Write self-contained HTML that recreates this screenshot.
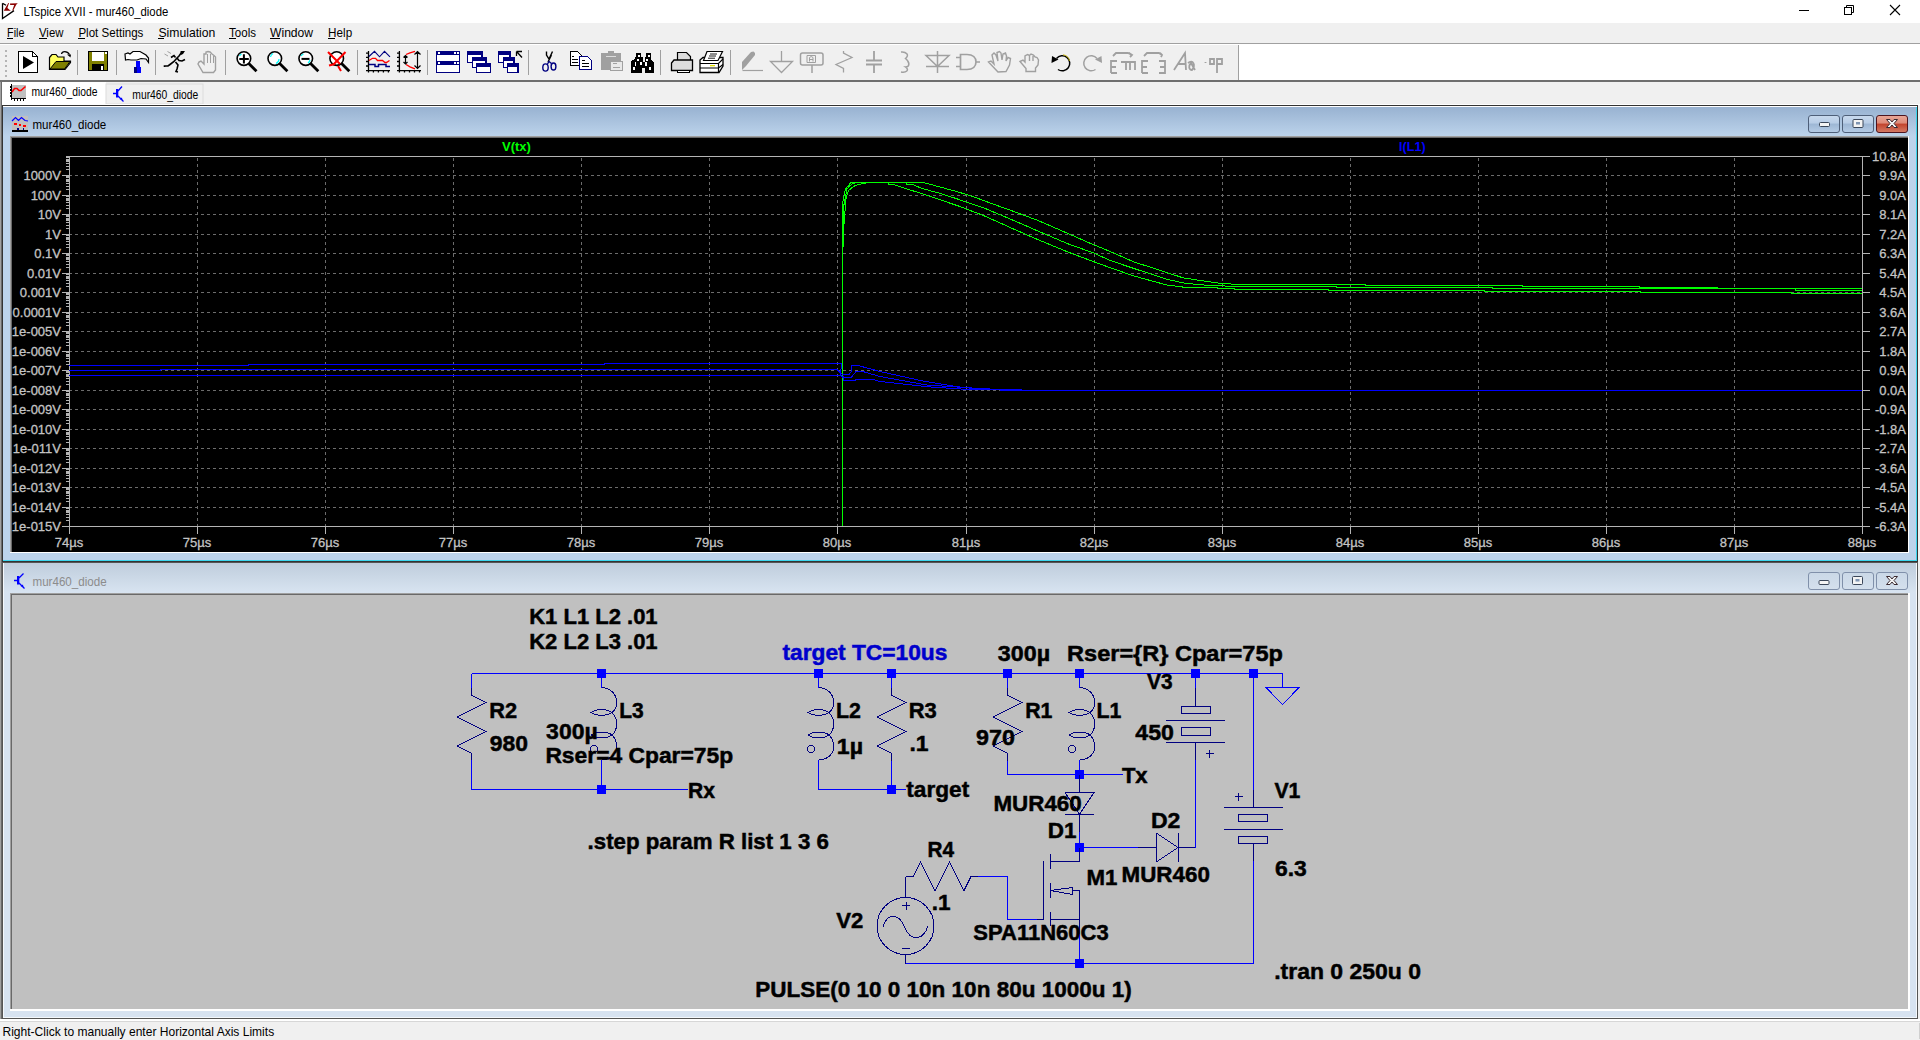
<!DOCTYPE html>
<html><head><meta charset="utf-8"><title>LTspice XVII - mur460_diode</title>
<style>
html,body{margin:0;padding:0;width:1920px;height:1040px;overflow:hidden;background:#f0f0f0;}
svg{position:absolute;left:0;top:0;display:block;font-family:"Liberation Sans",sans-serif;}
</style></head>
<body>
<svg width="1920" height="1040" viewBox="0 0 1920 1040">
<defs>
<linearGradient id="gAct" x1="0" y1="0" x2="0" y2="1"><stop offset="0" stop-color="#98b2d1"/><stop offset="1" stop-color="#bcd3eb"/></linearGradient>
<linearGradient id="gIn" x1="0" y1="0" x2="0" y2="1"><stop offset="0" stop-color="#bfcddc"/><stop offset="1" stop-color="#d8e4f1"/></linearGradient>
<linearGradient id="gBtnA" x1="0" y1="0" x2="0" y2="1"><stop offset="0" stop-color="#c9daee"/><stop offset="0.45" stop-color="#b7cce6"/><stop offset="0.5" stop-color="#9db6d4"/><stop offset="1" stop-color="#b5cce6"/></linearGradient>
<linearGradient id="gBtnC" x1="0" y1="0" x2="0" y2="1"><stop offset="0" stop-color="#eaa899"/><stop offset="0.45" stop-color="#dd8a78"/><stop offset="0.5" stop-color="#c2432c"/><stop offset="1" stop-color="#d47c66"/></linearGradient>
<linearGradient id="gBtnI" x1="0" y1="0" x2="0" y2="1"><stop offset="0" stop-color="#cad8e7"/><stop offset="1" stop-color="#d4e0ed"/></linearGradient>
</defs>
<!-- title bar -->
<rect x="0" y="0" width="1920" height="23" fill="#ffffff"/>
<rect x="0" y="43" width="1920" height="1" fill="#a0a0a0"/>
<rect x="0" y="44" width="1920" height="1" fill="#ffffff"/>
<!-- toolbar right white area -->
<rect x="1239" y="45" width="681" height="35" fill="#ffffff"/>
<rect x="1238" y="45" width="1" height="35" fill="#a0a0a0"/>
<rect x="0" y="80" width="1920" height="2" fill="#6e6e6e"/>
<!-- tabs -->
<rect x="2" y="82" width="104" height="23" fill="#ffffff"/>
<rect x="106" y="84" width="97" height="20" fill="#f0f0f0" stroke="#dcdcdc" stroke-width="1"/>
<rect x="0" y="82" width="1" height="938" fill="#a0a0a0"/>
<rect x="1" y="82" width="1" height="938" fill="#6a6a6a"/>
<rect x="2" y="104" width="1918" height="1" fill="#ffffff"/>
<!-- ========== plot window ========== -->
<rect x="2" y="105" width="1916" height="457" fill="#333333"/>
<rect x="3" y="106" width="1914" height="455" fill="#ffffff"/>
<rect x="3" y="107" width="1913" height="453" fill="#bcd3eb"/>
<rect x="3" y="107" width="1913" height="29" fill="url(#gAct)"/>
<rect x="3" y="560" width="1914" height="1" fill="#3cd6ee"/>
<rect x="1916" y="107" width="1" height="454" fill="#3cd6ee"/>
<rect x="10" y="136" width="1899" height="417" fill="#ffffff"/>
<rect x="10" y="136" width="1898" height="416" fill="#a0a0a0"/>
<rect x="11" y="137" width="1897" height="415" fill="#696969"/>
<rect x="12" y="138" width="1896" height="414" fill="#000000"/>
<!-- plot window buttons -->
<rect x="1808.5" y="115.5" width="31" height="17" rx="2.5" fill="url(#gBtnA)" stroke="#4e5f79"/>
<rect x="1842.5" y="115.5" width="31" height="17" rx="2.5" fill="url(#gBtnA)" stroke="#4e5f79"/>
<rect x="1876.5" y="115.5" width="31" height="17" rx="2.5" fill="url(#gBtnC)" stroke="#4c1520"/>
<rect x="1819.5" y="122.5" width="10" height="4" rx="1" fill="#f4f4f4" stroke="#3a4659"/>
<rect x="1853" y="119.5" width="10" height="8" rx="1" fill="#f4f4f4" stroke="#3a4659"/>
<rect x="1856" y="122" width="4" height="2.5" fill="#7f95b3"/>
<path d="M1886.5,119.5 L1890,119.5 L1892,122 L1894,119.5 L1897.5,119.5 L1894,123.5 L1897.5,127.5 L1894,127.5 L1892,125 L1890,127.5 L1886.5,127.5 L1890,123.5 Z" fill="#f4f4f4" stroke="#3a2a30" stroke-width="1"/>
<!-- plot content -->
<g font-family="Liberation Sans, sans-serif" shape-rendering="crispEdges">
<line x1="197.50" y1="158.00" x2="197.50" y2="526.00" stroke="#6c6c6c" stroke-width="1" stroke-dasharray="3 3"/>
<line x1="325.50" y1="158.00" x2="325.50" y2="526.00" stroke="#6c6c6c" stroke-width="1" stroke-dasharray="3 3"/>
<line x1="453.50" y1="158.00" x2="453.50" y2="526.00" stroke="#6c6c6c" stroke-width="1" stroke-dasharray="3 3"/>
<line x1="581.50" y1="158.00" x2="581.50" y2="526.00" stroke="#6c6c6c" stroke-width="1" stroke-dasharray="3 3"/>
<line x1="709.50" y1="158.00" x2="709.50" y2="526.00" stroke="#6c6c6c" stroke-width="1" stroke-dasharray="3 3"/>
<line x1="837.50" y1="158.00" x2="837.50" y2="526.00" stroke="#6c6c6c" stroke-width="1" stroke-dasharray="3 3"/>
<line x1="966.50" y1="158.00" x2="966.50" y2="526.00" stroke="#6c6c6c" stroke-width="1" stroke-dasharray="3 3"/>
<line x1="1094.50" y1="158.00" x2="1094.50" y2="526.00" stroke="#6c6c6c" stroke-width="1" stroke-dasharray="3 3"/>
<line x1="1222.50" y1="158.00" x2="1222.50" y2="526.00" stroke="#6c6c6c" stroke-width="1" stroke-dasharray="3 3"/>
<line x1="1350.50" y1="158.00" x2="1350.50" y2="526.00" stroke="#6c6c6c" stroke-width="1" stroke-dasharray="3 3"/>
<line x1="1478.50" y1="158.00" x2="1478.50" y2="526.00" stroke="#6c6c6c" stroke-width="1" stroke-dasharray="3 3"/>
<line x1="1606.50" y1="158.00" x2="1606.50" y2="526.00" stroke="#6c6c6c" stroke-width="1" stroke-dasharray="3 3"/>
<line x1="1734.50" y1="158.00" x2="1734.50" y2="526.00" stroke="#6c6c6c" stroke-width="1" stroke-dasharray="3 3"/>
<line x1="69.00" y1="175.50" x2="1862.00" y2="175.50" stroke="#6c6c6c" stroke-width="1" stroke-dasharray="3 3"/>
<line x1="69.00" y1="195.50" x2="1862.00" y2="195.50" stroke="#6c6c6c" stroke-width="1" stroke-dasharray="3 3"/>
<line x1="69.00" y1="214.50" x2="1862.00" y2="214.50" stroke="#6c6c6c" stroke-width="1" stroke-dasharray="3 3"/>
<line x1="69.00" y1="234.50" x2="1862.00" y2="234.50" stroke="#6c6c6c" stroke-width="1" stroke-dasharray="3 3"/>
<line x1="69.00" y1="253.50" x2="1862.00" y2="253.50" stroke="#6c6c6c" stroke-width="1" stroke-dasharray="3 3"/>
<line x1="69.00" y1="273.50" x2="1862.00" y2="273.50" stroke="#6c6c6c" stroke-width="1" stroke-dasharray="3 3"/>
<line x1="69.00" y1="292.50" x2="1862.00" y2="292.50" stroke="#6c6c6c" stroke-width="1" stroke-dasharray="3 3"/>
<line x1="69.00" y1="312.50" x2="1862.00" y2="312.50" stroke="#6c6c6c" stroke-width="1" stroke-dasharray="3 3"/>
<line x1="69.00" y1="331.50" x2="1862.00" y2="331.50" stroke="#6c6c6c" stroke-width="1" stroke-dasharray="3 3"/>
<line x1="69.00" y1="351.50" x2="1862.00" y2="351.50" stroke="#6c6c6c" stroke-width="1" stroke-dasharray="3 3"/>
<line x1="69.00" y1="370.50" x2="1862.00" y2="370.50" stroke="#6c6c6c" stroke-width="1" stroke-dasharray="3 3"/>
<line x1="69.00" y1="390.50" x2="1862.00" y2="390.50" stroke="#6c6c6c" stroke-width="1" stroke-dasharray="3 3"/>
<line x1="69.00" y1="409.50" x2="1862.00" y2="409.50" stroke="#6c6c6c" stroke-width="1" stroke-dasharray="3 3"/>
<line x1="69.00" y1="429.50" x2="1862.00" y2="429.50" stroke="#6c6c6c" stroke-width="1" stroke-dasharray="3 3"/>
<line x1="69.00" y1="448.50" x2="1862.00" y2="448.50" stroke="#6c6c6c" stroke-width="1" stroke-dasharray="3 3"/>
<line x1="69.00" y1="468.50" x2="1862.00" y2="468.50" stroke="#6c6c6c" stroke-width="1" stroke-dasharray="3 3"/>
<line x1="69.00" y1="487.50" x2="1862.00" y2="487.50" stroke="#6c6c6c" stroke-width="1" stroke-dasharray="3 3"/>
<line x1="69.00" y1="507.50" x2="1862.00" y2="507.50" stroke="#6c6c6c" stroke-width="1" stroke-dasharray="3 3"/>
<rect x="69.5" y="156.5" width="1793" height="370" fill="none" stroke="#b4b4b4" stroke-width="1"/>
<line x1="62.00" y1="175.50" x2="69.00" y2="175.50" stroke="#b4b4b4" stroke-width="1"/>
<text x="61" y="180.0" text-anchor="end" font-size="13" fill="#c4c4c4" stroke="#c4c4c4" stroke-width="0.3">1000V</text>
<line x1="62.00" y1="195.50" x2="69.00" y2="195.50" stroke="#b4b4b4" stroke-width="1"/>
<text x="61" y="200.0" text-anchor="end" font-size="13" fill="#c4c4c4" stroke="#c4c4c4" stroke-width="0.3">100V</text>
<line x1="62.00" y1="214.50" x2="69.00" y2="214.50" stroke="#b4b4b4" stroke-width="1"/>
<text x="61" y="219.0" text-anchor="end" font-size="13" fill="#c4c4c4" stroke="#c4c4c4" stroke-width="0.3">10V</text>
<line x1="62.00" y1="234.50" x2="69.00" y2="234.50" stroke="#b4b4b4" stroke-width="1"/>
<text x="61" y="239.0" text-anchor="end" font-size="13" fill="#c4c4c4" stroke="#c4c4c4" stroke-width="0.3">1V</text>
<line x1="62.00" y1="253.50" x2="69.00" y2="253.50" stroke="#b4b4b4" stroke-width="1"/>
<text x="61" y="258.0" text-anchor="end" font-size="13" fill="#c4c4c4" stroke="#c4c4c4" stroke-width="0.3">0.1V</text>
<line x1="62.00" y1="273.50" x2="69.00" y2="273.50" stroke="#b4b4b4" stroke-width="1"/>
<text x="61" y="278.0" text-anchor="end" font-size="13" fill="#c4c4c4" stroke="#c4c4c4" stroke-width="0.3">0.01V</text>
<line x1="62.00" y1="292.50" x2="69.00" y2="292.50" stroke="#b4b4b4" stroke-width="1"/>
<text x="61" y="297.0" text-anchor="end" font-size="13" fill="#c4c4c4" stroke="#c4c4c4" stroke-width="0.3">0.001V</text>
<line x1="62.00" y1="312.50" x2="69.00" y2="312.50" stroke="#b4b4b4" stroke-width="1"/>
<text x="61" y="317.0" text-anchor="end" font-size="13" fill="#c4c4c4" stroke="#c4c4c4" stroke-width="0.3">0.0001V</text>
<line x1="62.00" y1="331.50" x2="69.00" y2="331.50" stroke="#b4b4b4" stroke-width="1"/>
<text x="61" y="336.0" text-anchor="end" font-size="13" fill="#c4c4c4" stroke="#c4c4c4" stroke-width="0.3">1e-005V</text>
<line x1="62.00" y1="351.50" x2="69.00" y2="351.50" stroke="#b4b4b4" stroke-width="1"/>
<text x="61" y="356.0" text-anchor="end" font-size="13" fill="#c4c4c4" stroke="#c4c4c4" stroke-width="0.3">1e-006V</text>
<line x1="62.00" y1="370.50" x2="69.00" y2="370.50" stroke="#b4b4b4" stroke-width="1"/>
<text x="61" y="375.0" text-anchor="end" font-size="13" fill="#c4c4c4" stroke="#c4c4c4" stroke-width="0.3">1e-007V</text>
<line x1="62.00" y1="390.50" x2="69.00" y2="390.50" stroke="#b4b4b4" stroke-width="1"/>
<text x="61" y="395.0" text-anchor="end" font-size="13" fill="#c4c4c4" stroke="#c4c4c4" stroke-width="0.3">1e-008V</text>
<line x1="62.00" y1="409.50" x2="69.00" y2="409.50" stroke="#b4b4b4" stroke-width="1"/>
<text x="61" y="414.0" text-anchor="end" font-size="13" fill="#c4c4c4" stroke="#c4c4c4" stroke-width="0.3">1e-009V</text>
<line x1="62.00" y1="429.50" x2="69.00" y2="429.50" stroke="#b4b4b4" stroke-width="1"/>
<text x="61" y="434.0" text-anchor="end" font-size="13" fill="#c4c4c4" stroke="#c4c4c4" stroke-width="0.3">1e-010V</text>
<line x1="62.00" y1="448.50" x2="69.00" y2="448.50" stroke="#b4b4b4" stroke-width="1"/>
<text x="61" y="453.0" text-anchor="end" font-size="13" fill="#c4c4c4" stroke="#c4c4c4" stroke-width="0.3">1e-011V</text>
<line x1="62.00" y1="468.50" x2="69.00" y2="468.50" stroke="#b4b4b4" stroke-width="1"/>
<text x="61" y="473.0" text-anchor="end" font-size="13" fill="#c4c4c4" stroke="#c4c4c4" stroke-width="0.3">1e-012V</text>
<line x1="62.00" y1="487.50" x2="69.00" y2="487.50" stroke="#b4b4b4" stroke-width="1"/>
<text x="61" y="492.0" text-anchor="end" font-size="13" fill="#c4c4c4" stroke="#c4c4c4" stroke-width="0.3">1e-013V</text>
<line x1="62.00" y1="507.50" x2="69.00" y2="507.50" stroke="#b4b4b4" stroke-width="1"/>
<text x="61" y="512.0" text-anchor="end" font-size="13" fill="#c4c4c4" stroke="#c4c4c4" stroke-width="0.3">1e-014V</text>
<line x1="62.00" y1="526.50" x2="69.00" y2="526.50" stroke="#b4b4b4" stroke-width="1"/>
<text x="61" y="531.0" text-anchor="end" font-size="13" fill="#c4c4c4" stroke="#c4c4c4" stroke-width="0.3">1e-015V</text>
<line x1="66.00" y1="169.50" x2="69.00" y2="169.50" stroke="#b4b4b4" stroke-width="1"/>
<line x1="66.00" y1="166.50" x2="69.00" y2="166.50" stroke="#b4b4b4" stroke-width="1"/>
<line x1="66.00" y1="163.50" x2="69.00" y2="163.50" stroke="#b4b4b4" stroke-width="1"/>
<line x1="66.00" y1="161.50" x2="69.00" y2="161.50" stroke="#b4b4b4" stroke-width="1"/>
<line x1="66.00" y1="160.50" x2="69.00" y2="160.50" stroke="#b4b4b4" stroke-width="1"/>
<line x1="66.00" y1="159.50" x2="69.00" y2="159.50" stroke="#b4b4b4" stroke-width="1"/>
<line x1="66.00" y1="157.50" x2="69.00" y2="157.50" stroke="#b4b4b4" stroke-width="1"/>
<line x1="66.00" y1="156.50" x2="69.00" y2="156.50" stroke="#b4b4b4" stroke-width="1"/>
<line x1="66.00" y1="189.50" x2="69.00" y2="189.50" stroke="#b4b4b4" stroke-width="1"/>
<line x1="66.00" y1="186.50" x2="69.00" y2="186.50" stroke="#b4b4b4" stroke-width="1"/>
<line x1="66.00" y1="183.50" x2="69.00" y2="183.50" stroke="#b4b4b4" stroke-width="1"/>
<line x1="66.00" y1="181.50" x2="69.00" y2="181.50" stroke="#b4b4b4" stroke-width="1"/>
<line x1="66.00" y1="180.50" x2="69.00" y2="180.50" stroke="#b4b4b4" stroke-width="1"/>
<line x1="66.00" y1="179.50" x2="69.00" y2="179.50" stroke="#b4b4b4" stroke-width="1"/>
<line x1="66.00" y1="177.50" x2="69.00" y2="177.50" stroke="#b4b4b4" stroke-width="1"/>
<line x1="66.00" y1="176.50" x2="69.00" y2="176.50" stroke="#b4b4b4" stroke-width="1"/>
<line x1="66.00" y1="208.50" x2="69.00" y2="208.50" stroke="#b4b4b4" stroke-width="1"/>
<line x1="66.00" y1="205.50" x2="69.00" y2="205.50" stroke="#b4b4b4" stroke-width="1"/>
<line x1="66.00" y1="202.50" x2="69.00" y2="202.50" stroke="#b4b4b4" stroke-width="1"/>
<line x1="66.00" y1="200.50" x2="69.00" y2="200.50" stroke="#b4b4b4" stroke-width="1"/>
<line x1="66.00" y1="199.50" x2="69.00" y2="199.50" stroke="#b4b4b4" stroke-width="1"/>
<line x1="66.00" y1="198.50" x2="69.00" y2="198.50" stroke="#b4b4b4" stroke-width="1"/>
<line x1="66.00" y1="196.50" x2="69.00" y2="196.50" stroke="#b4b4b4" stroke-width="1"/>
<line x1="66.00" y1="195.50" x2="69.00" y2="195.50" stroke="#b4b4b4" stroke-width="1"/>
<line x1="66.00" y1="228.50" x2="69.00" y2="228.50" stroke="#b4b4b4" stroke-width="1"/>
<line x1="66.00" y1="225.50" x2="69.00" y2="225.50" stroke="#b4b4b4" stroke-width="1"/>
<line x1="66.00" y1="222.50" x2="69.00" y2="222.50" stroke="#b4b4b4" stroke-width="1"/>
<line x1="66.00" y1="220.50" x2="69.00" y2="220.50" stroke="#b4b4b4" stroke-width="1"/>
<line x1="66.00" y1="219.50" x2="69.00" y2="219.50" stroke="#b4b4b4" stroke-width="1"/>
<line x1="66.00" y1="218.50" x2="69.00" y2="218.50" stroke="#b4b4b4" stroke-width="1"/>
<line x1="66.00" y1="216.50" x2="69.00" y2="216.50" stroke="#b4b4b4" stroke-width="1"/>
<line x1="66.00" y1="215.50" x2="69.00" y2="215.50" stroke="#b4b4b4" stroke-width="1"/>
<line x1="66.00" y1="247.50" x2="69.00" y2="247.50" stroke="#b4b4b4" stroke-width="1"/>
<line x1="66.00" y1="244.50" x2="69.00" y2="244.50" stroke="#b4b4b4" stroke-width="1"/>
<line x1="66.00" y1="241.50" x2="69.00" y2="241.50" stroke="#b4b4b4" stroke-width="1"/>
<line x1="66.00" y1="239.50" x2="69.00" y2="239.50" stroke="#b4b4b4" stroke-width="1"/>
<line x1="66.00" y1="238.50" x2="69.00" y2="238.50" stroke="#b4b4b4" stroke-width="1"/>
<line x1="66.00" y1="237.50" x2="69.00" y2="237.50" stroke="#b4b4b4" stroke-width="1"/>
<line x1="66.00" y1="235.50" x2="69.00" y2="235.50" stroke="#b4b4b4" stroke-width="1"/>
<line x1="66.00" y1="234.50" x2="69.00" y2="234.50" stroke="#b4b4b4" stroke-width="1"/>
<line x1="66.00" y1="267.50" x2="69.00" y2="267.50" stroke="#b4b4b4" stroke-width="1"/>
<line x1="66.00" y1="264.50" x2="69.00" y2="264.50" stroke="#b4b4b4" stroke-width="1"/>
<line x1="66.00" y1="261.50" x2="69.00" y2="261.50" stroke="#b4b4b4" stroke-width="1"/>
<line x1="66.00" y1="259.50" x2="69.00" y2="259.50" stroke="#b4b4b4" stroke-width="1"/>
<line x1="66.00" y1="258.50" x2="69.00" y2="258.50" stroke="#b4b4b4" stroke-width="1"/>
<line x1="66.00" y1="257.50" x2="69.00" y2="257.50" stroke="#b4b4b4" stroke-width="1"/>
<line x1="66.00" y1="255.50" x2="69.00" y2="255.50" stroke="#b4b4b4" stroke-width="1"/>
<line x1="66.00" y1="254.50" x2="69.00" y2="254.50" stroke="#b4b4b4" stroke-width="1"/>
<line x1="66.00" y1="286.50" x2="69.00" y2="286.50" stroke="#b4b4b4" stroke-width="1"/>
<line x1="66.00" y1="283.50" x2="69.00" y2="283.50" stroke="#b4b4b4" stroke-width="1"/>
<line x1="66.00" y1="280.50" x2="69.00" y2="280.50" stroke="#b4b4b4" stroke-width="1"/>
<line x1="66.00" y1="278.50" x2="69.00" y2="278.50" stroke="#b4b4b4" stroke-width="1"/>
<line x1="66.00" y1="277.50" x2="69.00" y2="277.50" stroke="#b4b4b4" stroke-width="1"/>
<line x1="66.00" y1="276.50" x2="69.00" y2="276.50" stroke="#b4b4b4" stroke-width="1"/>
<line x1="66.00" y1="274.50" x2="69.00" y2="274.50" stroke="#b4b4b4" stroke-width="1"/>
<line x1="66.00" y1="273.50" x2="69.00" y2="273.50" stroke="#b4b4b4" stroke-width="1"/>
<line x1="66.00" y1="306.50" x2="69.00" y2="306.50" stroke="#b4b4b4" stroke-width="1"/>
<line x1="66.00" y1="303.50" x2="69.00" y2="303.50" stroke="#b4b4b4" stroke-width="1"/>
<line x1="66.00" y1="300.50" x2="69.00" y2="300.50" stroke="#b4b4b4" stroke-width="1"/>
<line x1="66.00" y1="298.50" x2="69.00" y2="298.50" stroke="#b4b4b4" stroke-width="1"/>
<line x1="66.00" y1="297.50" x2="69.00" y2="297.50" stroke="#b4b4b4" stroke-width="1"/>
<line x1="66.00" y1="296.50" x2="69.00" y2="296.50" stroke="#b4b4b4" stroke-width="1"/>
<line x1="66.00" y1="294.50" x2="69.00" y2="294.50" stroke="#b4b4b4" stroke-width="1"/>
<line x1="66.00" y1="293.50" x2="69.00" y2="293.50" stroke="#b4b4b4" stroke-width="1"/>
<line x1="66.00" y1="325.50" x2="69.00" y2="325.50" stroke="#b4b4b4" stroke-width="1"/>
<line x1="66.00" y1="322.50" x2="69.00" y2="322.50" stroke="#b4b4b4" stroke-width="1"/>
<line x1="66.00" y1="319.50" x2="69.00" y2="319.50" stroke="#b4b4b4" stroke-width="1"/>
<line x1="66.00" y1="317.50" x2="69.00" y2="317.50" stroke="#b4b4b4" stroke-width="1"/>
<line x1="66.00" y1="316.50" x2="69.00" y2="316.50" stroke="#b4b4b4" stroke-width="1"/>
<line x1="66.00" y1="315.50" x2="69.00" y2="315.50" stroke="#b4b4b4" stroke-width="1"/>
<line x1="66.00" y1="313.50" x2="69.00" y2="313.50" stroke="#b4b4b4" stroke-width="1"/>
<line x1="66.00" y1="312.50" x2="69.00" y2="312.50" stroke="#b4b4b4" stroke-width="1"/>
<line x1="66.00" y1="345.50" x2="69.00" y2="345.50" stroke="#b4b4b4" stroke-width="1"/>
<line x1="66.00" y1="342.50" x2="69.00" y2="342.50" stroke="#b4b4b4" stroke-width="1"/>
<line x1="66.00" y1="339.50" x2="69.00" y2="339.50" stroke="#b4b4b4" stroke-width="1"/>
<line x1="66.00" y1="337.50" x2="69.00" y2="337.50" stroke="#b4b4b4" stroke-width="1"/>
<line x1="66.00" y1="336.50" x2="69.00" y2="336.50" stroke="#b4b4b4" stroke-width="1"/>
<line x1="66.00" y1="335.50" x2="69.00" y2="335.50" stroke="#b4b4b4" stroke-width="1"/>
<line x1="66.00" y1="333.50" x2="69.00" y2="333.50" stroke="#b4b4b4" stroke-width="1"/>
<line x1="66.00" y1="332.50" x2="69.00" y2="332.50" stroke="#b4b4b4" stroke-width="1"/>
<line x1="66.00" y1="364.50" x2="69.00" y2="364.50" stroke="#b4b4b4" stroke-width="1"/>
<line x1="66.00" y1="361.50" x2="69.00" y2="361.50" stroke="#b4b4b4" stroke-width="1"/>
<line x1="66.00" y1="358.50" x2="69.00" y2="358.50" stroke="#b4b4b4" stroke-width="1"/>
<line x1="66.00" y1="356.50" x2="69.00" y2="356.50" stroke="#b4b4b4" stroke-width="1"/>
<line x1="66.00" y1="355.50" x2="69.00" y2="355.50" stroke="#b4b4b4" stroke-width="1"/>
<line x1="66.00" y1="354.50" x2="69.00" y2="354.50" stroke="#b4b4b4" stroke-width="1"/>
<line x1="66.00" y1="352.50" x2="69.00" y2="352.50" stroke="#b4b4b4" stroke-width="1"/>
<line x1="66.00" y1="351.50" x2="69.00" y2="351.50" stroke="#b4b4b4" stroke-width="1"/>
<line x1="66.00" y1="384.50" x2="69.00" y2="384.50" stroke="#b4b4b4" stroke-width="1"/>
<line x1="66.00" y1="381.50" x2="69.00" y2="381.50" stroke="#b4b4b4" stroke-width="1"/>
<line x1="66.00" y1="378.50" x2="69.00" y2="378.50" stroke="#b4b4b4" stroke-width="1"/>
<line x1="66.00" y1="376.50" x2="69.00" y2="376.50" stroke="#b4b4b4" stroke-width="1"/>
<line x1="66.00" y1="375.50" x2="69.00" y2="375.50" stroke="#b4b4b4" stroke-width="1"/>
<line x1="66.00" y1="374.50" x2="69.00" y2="374.50" stroke="#b4b4b4" stroke-width="1"/>
<line x1="66.00" y1="372.50" x2="69.00" y2="372.50" stroke="#b4b4b4" stroke-width="1"/>
<line x1="66.00" y1="371.50" x2="69.00" y2="371.50" stroke="#b4b4b4" stroke-width="1"/>
<line x1="66.00" y1="403.50" x2="69.00" y2="403.50" stroke="#b4b4b4" stroke-width="1"/>
<line x1="66.00" y1="400.50" x2="69.00" y2="400.50" stroke="#b4b4b4" stroke-width="1"/>
<line x1="66.00" y1="397.50" x2="69.00" y2="397.50" stroke="#b4b4b4" stroke-width="1"/>
<line x1="66.00" y1="395.50" x2="69.00" y2="395.50" stroke="#b4b4b4" stroke-width="1"/>
<line x1="66.00" y1="394.50" x2="69.00" y2="394.50" stroke="#b4b4b4" stroke-width="1"/>
<line x1="66.00" y1="393.50" x2="69.00" y2="393.50" stroke="#b4b4b4" stroke-width="1"/>
<line x1="66.00" y1="391.50" x2="69.00" y2="391.50" stroke="#b4b4b4" stroke-width="1"/>
<line x1="66.00" y1="390.50" x2="69.00" y2="390.50" stroke="#b4b4b4" stroke-width="1"/>
<line x1="66.00" y1="423.50" x2="69.00" y2="423.50" stroke="#b4b4b4" stroke-width="1"/>
<line x1="66.00" y1="420.50" x2="69.00" y2="420.50" stroke="#b4b4b4" stroke-width="1"/>
<line x1="66.00" y1="417.50" x2="69.00" y2="417.50" stroke="#b4b4b4" stroke-width="1"/>
<line x1="66.00" y1="415.50" x2="69.00" y2="415.50" stroke="#b4b4b4" stroke-width="1"/>
<line x1="66.00" y1="414.50" x2="69.00" y2="414.50" stroke="#b4b4b4" stroke-width="1"/>
<line x1="66.00" y1="413.50" x2="69.00" y2="413.50" stroke="#b4b4b4" stroke-width="1"/>
<line x1="66.00" y1="411.50" x2="69.00" y2="411.50" stroke="#b4b4b4" stroke-width="1"/>
<line x1="66.00" y1="410.50" x2="69.00" y2="410.50" stroke="#b4b4b4" stroke-width="1"/>
<line x1="66.00" y1="442.50" x2="69.00" y2="442.50" stroke="#b4b4b4" stroke-width="1"/>
<line x1="66.00" y1="439.50" x2="69.00" y2="439.50" stroke="#b4b4b4" stroke-width="1"/>
<line x1="66.00" y1="436.50" x2="69.00" y2="436.50" stroke="#b4b4b4" stroke-width="1"/>
<line x1="66.00" y1="434.50" x2="69.00" y2="434.50" stroke="#b4b4b4" stroke-width="1"/>
<line x1="66.00" y1="433.50" x2="69.00" y2="433.50" stroke="#b4b4b4" stroke-width="1"/>
<line x1="66.00" y1="432.50" x2="69.00" y2="432.50" stroke="#b4b4b4" stroke-width="1"/>
<line x1="66.00" y1="430.50" x2="69.00" y2="430.50" stroke="#b4b4b4" stroke-width="1"/>
<line x1="66.00" y1="429.50" x2="69.00" y2="429.50" stroke="#b4b4b4" stroke-width="1"/>
<line x1="66.00" y1="462.50" x2="69.00" y2="462.50" stroke="#b4b4b4" stroke-width="1"/>
<line x1="66.00" y1="459.50" x2="69.00" y2="459.50" stroke="#b4b4b4" stroke-width="1"/>
<line x1="66.00" y1="456.50" x2="69.00" y2="456.50" stroke="#b4b4b4" stroke-width="1"/>
<line x1="66.00" y1="454.50" x2="69.00" y2="454.50" stroke="#b4b4b4" stroke-width="1"/>
<line x1="66.00" y1="453.50" x2="69.00" y2="453.50" stroke="#b4b4b4" stroke-width="1"/>
<line x1="66.00" y1="452.50" x2="69.00" y2="452.50" stroke="#b4b4b4" stroke-width="1"/>
<line x1="66.00" y1="450.50" x2="69.00" y2="450.50" stroke="#b4b4b4" stroke-width="1"/>
<line x1="66.00" y1="449.50" x2="69.00" y2="449.50" stroke="#b4b4b4" stroke-width="1"/>
<line x1="66.00" y1="481.50" x2="69.00" y2="481.50" stroke="#b4b4b4" stroke-width="1"/>
<line x1="66.00" y1="478.50" x2="69.00" y2="478.50" stroke="#b4b4b4" stroke-width="1"/>
<line x1="66.00" y1="475.50" x2="69.00" y2="475.50" stroke="#b4b4b4" stroke-width="1"/>
<line x1="66.00" y1="473.50" x2="69.00" y2="473.50" stroke="#b4b4b4" stroke-width="1"/>
<line x1="66.00" y1="472.50" x2="69.00" y2="472.50" stroke="#b4b4b4" stroke-width="1"/>
<line x1="66.00" y1="471.50" x2="69.00" y2="471.50" stroke="#b4b4b4" stroke-width="1"/>
<line x1="66.00" y1="469.50" x2="69.00" y2="469.50" stroke="#b4b4b4" stroke-width="1"/>
<line x1="66.00" y1="468.50" x2="69.00" y2="468.50" stroke="#b4b4b4" stroke-width="1"/>
<line x1="66.00" y1="501.50" x2="69.00" y2="501.50" stroke="#b4b4b4" stroke-width="1"/>
<line x1="66.00" y1="498.50" x2="69.00" y2="498.50" stroke="#b4b4b4" stroke-width="1"/>
<line x1="66.00" y1="495.50" x2="69.00" y2="495.50" stroke="#b4b4b4" stroke-width="1"/>
<line x1="66.00" y1="493.50" x2="69.00" y2="493.50" stroke="#b4b4b4" stroke-width="1"/>
<line x1="66.00" y1="492.50" x2="69.00" y2="492.50" stroke="#b4b4b4" stroke-width="1"/>
<line x1="66.00" y1="491.50" x2="69.00" y2="491.50" stroke="#b4b4b4" stroke-width="1"/>
<line x1="66.00" y1="489.50" x2="69.00" y2="489.50" stroke="#b4b4b4" stroke-width="1"/>
<line x1="66.00" y1="488.50" x2="69.00" y2="488.50" stroke="#b4b4b4" stroke-width="1"/>
<line x1="66.00" y1="520.50" x2="69.00" y2="520.50" stroke="#b4b4b4" stroke-width="1"/>
<line x1="66.00" y1="517.50" x2="69.00" y2="517.50" stroke="#b4b4b4" stroke-width="1"/>
<line x1="66.00" y1="514.50" x2="69.00" y2="514.50" stroke="#b4b4b4" stroke-width="1"/>
<line x1="66.00" y1="512.50" x2="69.00" y2="512.50" stroke="#b4b4b4" stroke-width="1"/>
<line x1="66.00" y1="511.50" x2="69.00" y2="511.50" stroke="#b4b4b4" stroke-width="1"/>
<line x1="66.00" y1="510.50" x2="69.00" y2="510.50" stroke="#b4b4b4" stroke-width="1"/>
<line x1="66.00" y1="508.50" x2="69.00" y2="508.50" stroke="#b4b4b4" stroke-width="1"/>
<line x1="66.00" y1="507.50" x2="69.00" y2="507.50" stroke="#b4b4b4" stroke-width="1"/>
<line x1="1862.00" y1="156.50" x2="1870.00" y2="156.50" stroke="#b4b4b4" stroke-width="1"/>
<text x="1906" y="161.0" text-anchor="end" font-size="13" fill="#c4c4c4" stroke="#c4c4c4" stroke-width="0.3">10.8A</text>
<line x1="1862.00" y1="175.50" x2="1870.00" y2="175.50" stroke="#b4b4b4" stroke-width="1"/>
<text x="1906" y="180.0" text-anchor="end" font-size="13" fill="#c4c4c4" stroke="#c4c4c4" stroke-width="0.3">9.9A</text>
<line x1="1862.00" y1="195.50" x2="1870.00" y2="195.50" stroke="#b4b4b4" stroke-width="1"/>
<text x="1906" y="200.0" text-anchor="end" font-size="13" fill="#c4c4c4" stroke="#c4c4c4" stroke-width="0.3">9.0A</text>
<line x1="1862.00" y1="214.50" x2="1870.00" y2="214.50" stroke="#b4b4b4" stroke-width="1"/>
<text x="1906" y="219.0" text-anchor="end" font-size="13" fill="#c4c4c4" stroke="#c4c4c4" stroke-width="0.3">8.1A</text>
<line x1="1862.00" y1="234.50" x2="1870.00" y2="234.50" stroke="#b4b4b4" stroke-width="1"/>
<text x="1906" y="239.0" text-anchor="end" font-size="13" fill="#c4c4c4" stroke="#c4c4c4" stroke-width="0.3">7.2A</text>
<line x1="1862.00" y1="253.50" x2="1870.00" y2="253.50" stroke="#b4b4b4" stroke-width="1"/>
<text x="1906" y="258.0" text-anchor="end" font-size="13" fill="#c4c4c4" stroke="#c4c4c4" stroke-width="0.3">6.3A</text>
<line x1="1862.00" y1="273.50" x2="1870.00" y2="273.50" stroke="#b4b4b4" stroke-width="1"/>
<text x="1906" y="278.0" text-anchor="end" font-size="13" fill="#c4c4c4" stroke="#c4c4c4" stroke-width="0.3">5.4A</text>
<line x1="1862.00" y1="292.50" x2="1870.00" y2="292.50" stroke="#b4b4b4" stroke-width="1"/>
<text x="1906" y="297.0" text-anchor="end" font-size="13" fill="#c4c4c4" stroke="#c4c4c4" stroke-width="0.3">4.5A</text>
<line x1="1862.00" y1="312.50" x2="1870.00" y2="312.50" stroke="#b4b4b4" stroke-width="1"/>
<text x="1906" y="317.0" text-anchor="end" font-size="13" fill="#c4c4c4" stroke="#c4c4c4" stroke-width="0.3">3.6A</text>
<line x1="1862.00" y1="331.50" x2="1870.00" y2="331.50" stroke="#b4b4b4" stroke-width="1"/>
<text x="1906" y="336.0" text-anchor="end" font-size="13" fill="#c4c4c4" stroke="#c4c4c4" stroke-width="0.3">2.7A</text>
<line x1="1862.00" y1="351.50" x2="1870.00" y2="351.50" stroke="#b4b4b4" stroke-width="1"/>
<text x="1906" y="356.0" text-anchor="end" font-size="13" fill="#c4c4c4" stroke="#c4c4c4" stroke-width="0.3">1.8A</text>
<line x1="1862.00" y1="370.50" x2="1870.00" y2="370.50" stroke="#b4b4b4" stroke-width="1"/>
<text x="1906" y="375.0" text-anchor="end" font-size="13" fill="#c4c4c4" stroke="#c4c4c4" stroke-width="0.3">0.9A</text>
<line x1="1862.00" y1="390.50" x2="1870.00" y2="390.50" stroke="#b4b4b4" stroke-width="1"/>
<text x="1906" y="395.0" text-anchor="end" font-size="13" fill="#c4c4c4" stroke="#c4c4c4" stroke-width="0.3">0.0A</text>
<line x1="1862.00" y1="409.50" x2="1870.00" y2="409.50" stroke="#b4b4b4" stroke-width="1"/>
<text x="1906" y="414.0" text-anchor="end" font-size="13" fill="#c4c4c4" stroke="#c4c4c4" stroke-width="0.3">-0.9A</text>
<line x1="1862.00" y1="429.50" x2="1870.00" y2="429.50" stroke="#b4b4b4" stroke-width="1"/>
<text x="1906" y="434.0" text-anchor="end" font-size="13" fill="#c4c4c4" stroke="#c4c4c4" stroke-width="0.3">-1.8A</text>
<line x1="1862.00" y1="448.50" x2="1870.00" y2="448.50" stroke="#b4b4b4" stroke-width="1"/>
<text x="1906" y="453.0" text-anchor="end" font-size="13" fill="#c4c4c4" stroke="#c4c4c4" stroke-width="0.3">-2.7A</text>
<line x1="1862.00" y1="468.50" x2="1870.00" y2="468.50" stroke="#b4b4b4" stroke-width="1"/>
<text x="1906" y="473.0" text-anchor="end" font-size="13" fill="#c4c4c4" stroke="#c4c4c4" stroke-width="0.3">-3.6A</text>
<line x1="1862.00" y1="487.50" x2="1870.00" y2="487.50" stroke="#b4b4b4" stroke-width="1"/>
<text x="1906" y="492.0" text-anchor="end" font-size="13" fill="#c4c4c4" stroke="#c4c4c4" stroke-width="0.3">-4.5A</text>
<line x1="1862.00" y1="507.50" x2="1870.00" y2="507.50" stroke="#b4b4b4" stroke-width="1"/>
<text x="1906" y="512.0" text-anchor="end" font-size="13" fill="#c4c4c4" stroke="#c4c4c4" stroke-width="0.3">-5.4A</text>
<line x1="1862.00" y1="526.50" x2="1870.00" y2="526.50" stroke="#b4b4b4" stroke-width="1"/>
<text x="1906" y="531.0" text-anchor="end" font-size="13" fill="#c4c4c4" stroke="#c4c4c4" stroke-width="0.3">-6.3A</text>
<line x1="69.50" y1="526.00" x2="69.50" y2="534.00" stroke="#b4b4b4" stroke-width="1"/>
<text x="69.0" y="546.8" text-anchor="middle" font-size="13" fill="#c4c4c4" stroke="#c4c4c4" stroke-width="0.3">74µs</text>
<line x1="197.50" y1="526.00" x2="197.50" y2="534.00" stroke="#b4b4b4" stroke-width="1"/>
<text x="197.0" y="546.8" text-anchor="middle" font-size="13" fill="#c4c4c4" stroke="#c4c4c4" stroke-width="0.3">75µs</text>
<line x1="325.50" y1="526.00" x2="325.50" y2="534.00" stroke="#b4b4b4" stroke-width="1"/>
<text x="325.0" y="546.8" text-anchor="middle" font-size="13" fill="#c4c4c4" stroke="#c4c4c4" stroke-width="0.3">76µs</text>
<line x1="453.50" y1="526.00" x2="453.50" y2="534.00" stroke="#b4b4b4" stroke-width="1"/>
<text x="453.0" y="546.8" text-anchor="middle" font-size="13" fill="#c4c4c4" stroke="#c4c4c4" stroke-width="0.3">77µs</text>
<line x1="581.50" y1="526.00" x2="581.50" y2="534.00" stroke="#b4b4b4" stroke-width="1"/>
<text x="581.0" y="546.8" text-anchor="middle" font-size="13" fill="#c4c4c4" stroke="#c4c4c4" stroke-width="0.3">78µs</text>
<line x1="709.50" y1="526.00" x2="709.50" y2="534.00" stroke="#b4b4b4" stroke-width="1"/>
<text x="709.0" y="546.8" text-anchor="middle" font-size="13" fill="#c4c4c4" stroke="#c4c4c4" stroke-width="0.3">79µs</text>
<line x1="837.50" y1="526.00" x2="837.50" y2="534.00" stroke="#b4b4b4" stroke-width="1"/>
<text x="837.0" y="546.8" text-anchor="middle" font-size="13" fill="#c4c4c4" stroke="#c4c4c4" stroke-width="0.3">80µs</text>
<line x1="966.50" y1="526.00" x2="966.50" y2="534.00" stroke="#b4b4b4" stroke-width="1"/>
<text x="966.0" y="546.8" text-anchor="middle" font-size="13" fill="#c4c4c4" stroke="#c4c4c4" stroke-width="0.3">81µs</text>
<line x1="1094.50" y1="526.00" x2="1094.50" y2="534.00" stroke="#b4b4b4" stroke-width="1"/>
<text x="1094.0" y="546.8" text-anchor="middle" font-size="13" fill="#c4c4c4" stroke="#c4c4c4" stroke-width="0.3">82µs</text>
<line x1="1222.50" y1="526.00" x2="1222.50" y2="534.00" stroke="#b4b4b4" stroke-width="1"/>
<text x="1222.0" y="546.8" text-anchor="middle" font-size="13" fill="#c4c4c4" stroke="#c4c4c4" stroke-width="0.3">83µs</text>
<line x1="1350.50" y1="526.00" x2="1350.50" y2="534.00" stroke="#b4b4b4" stroke-width="1"/>
<text x="1350.0" y="546.8" text-anchor="middle" font-size="13" fill="#c4c4c4" stroke="#c4c4c4" stroke-width="0.3">84µs</text>
<line x1="1478.50" y1="526.00" x2="1478.50" y2="534.00" stroke="#b4b4b4" stroke-width="1"/>
<text x="1478.0" y="546.8" text-anchor="middle" font-size="13" fill="#c4c4c4" stroke="#c4c4c4" stroke-width="0.3">85µs</text>
<line x1="1606.50" y1="526.00" x2="1606.50" y2="534.00" stroke="#b4b4b4" stroke-width="1"/>
<text x="1606.0" y="546.8" text-anchor="middle" font-size="13" fill="#c4c4c4" stroke="#c4c4c4" stroke-width="0.3">86µs</text>
<line x1="1734.50" y1="526.00" x2="1734.50" y2="534.00" stroke="#b4b4b4" stroke-width="1"/>
<text x="1734.0" y="546.8" text-anchor="middle" font-size="13" fill="#c4c4c4" stroke="#c4c4c4" stroke-width="0.3">87µs</text>
<line x1="1862.50" y1="526.00" x2="1862.50" y2="534.00" stroke="#b4b4b4" stroke-width="1"/>
<text x="1862.0" y="546.8" text-anchor="middle" font-size="13" fill="#c4c4c4" stroke="#c4c4c4" stroke-width="0.3">88µs</text>
<polyline points="842.50,526.00 842.50,247.00" fill="none" stroke="#00ff00" stroke-width="1"/>
<rect x="842" y="204" width="2" height="43" fill="#00ff00"/>
<polyline points="842.50,204.00 843.50,199.00 844.50,193.30 845.50,189.00 848.00,186.00 851.00,182.50 921.80,182.50 927.50,183.50 937.70,186.40 953.30,190.60 970.00,195.50 991.25,203.40 1010.80,210.40 1038.10,220.50 1061.60,230.70 1092.80,244.40 1110.00,251.40 1133.30,261.70 1166.70,272.50 1183.30,277.90 1200.00,280.40 1220.00,283.30 1240.00,284.60 1365.00,284.60 1365.00,285.50 1522.00,285.50 1522.00,286.50 1639.00,286.50 1639.00,287.50 1717.00,287.50 1717.00,288.50 1862.00,288.50" fill="none" stroke="#00ff00" stroke-width="1"/>
<polyline points="843.50,208.70 845.00,199.00 847.00,189.00 849.50,186.00 853.00,183.30 858.00,182.50 906.00,182.50 906.00,184.50 912.70,184.50 922.10,188.50 937.70,192.70 953.30,197.60 970.00,203.30 983.40,207.70 1014.70,220.90 1038.10,231.10 1069.40,244.40 1092.80,252.60 1110.00,260.40 1133.30,268.30 1166.70,279.20 1183.30,282.90 1200.00,284.80 1220.00,285.80 1240.00,286.70 1336.00,286.70 1336.00,287.50 1492.00,287.50 1492.00,288.50 1795.00,288.50 1795.00,290.50 1862.00,290.50" fill="none" stroke="#00ff00" stroke-width="1"/>
<polyline points="843.50,230.00 846.00,198.70 847.50,193.30 849.00,190.20 853.00,186.80 856.00,185.20 860.00,184.30 866.00,183.00 888.00,182.50 888.00,184.50 893.70,184.50 905.40,188.50 919.00,192.70 937.70,199.00 958.50,206.00 970.00,210.40 983.40,215.50 1014.70,229.50 1038.10,239.70 1069.40,252.60 1100.60,264.30 1133.30,275.80 1166.70,285.00 1183.30,287.10 1200.00,287.70 1234.00,288.30 1234.00,289.30 1328.00,289.50 1328.00,290.50 1484.00,290.50 1484.00,291.50 1640.00,291.50 1640.00,292.50 1791.00,292.50 1791.00,293.50 1862.00,293.50" fill="none" stroke="#00ff00" stroke-width="1"/>
<polyline points="69.00,365.50 248.00,365.50 248.00,364.50 604.00,364.50 604.00,363.50 841.50,363.50 841.50,368.50 840.00,370.50 840.00,372.50 842.00,374.00 845.00,374.50 849.00,374.50 851.00,372.00 851.50,365.50 858.00,365.50 880.00,371.50 921.70,380.80 957.50,386.70 976.70,388.80 1000.00,390.00 1862.00,390.00" fill="none" stroke="#0000ff" stroke-width="1"/>
<polyline points="69.00,370.50 160.00,370.50 160.00,369.50 837.00,369.50 840.00,372.50 841.00,375.00 842.00,376.50 845.00,377.50 851.00,377.50 855.00,373.00 855.50,371.00 861.00,371.00 880.00,376.50 926.70,385.00 976.70,388.30 1010.00,390.00 1862.00,390.00" fill="none" stroke="#0000ff" stroke-width="1"/>
<polyline points="69.00,375.50 840.50,375.50 842.00,376.50 843.00,378.00 843.50,380.50 855.00,380.50 855.50,379.50 873.00,379.50 880.00,381.50 896.70,383.30 926.70,386.70 968.30,389.50 1021.70,390.00 1862.00,390.00" fill="none" stroke="#0000ff" stroke-width="1"/>
</g>
<!-- ========== schematic window ========== -->
<rect x="2" y="562" width="1916" height="457" fill="#555555"/>
<rect x="3" y="563" width="1914" height="455" fill="#f4f8fc"/>
<rect x="4" y="563" width="1912" height="454" fill="#d7e3f1"/>
<rect x="4" y="563" width="1912" height="30" fill="url(#gIn)"/>
<rect x="10" y="593" width="1900" height="418" fill="#ffffff"/>
<rect x="10" y="593" width="1898" height="416" fill="#a0a0a0"/>
<rect x="11" y="594" width="1897" height="415" fill="#696969"/>
<rect x="12" y="595" width="1896" height="414" fill="#c0c0c0"/>
<!-- schematic window buttons -->
<rect x="1808.5" y="572.5" width="31" height="17" rx="2.5" fill="url(#gBtnI)" stroke="#8090aa"/>
<rect x="1842.5" y="572.5" width="31" height="17" rx="2.5" fill="url(#gBtnI)" stroke="#8090aa"/>
<rect x="1876.5" y="572.5" width="31" height="17" rx="2.5" fill="url(#gBtnI)" stroke="#8090aa"/>
<rect x="1819" y="580.5" width="10" height="4" rx="1" fill="#f4f4f4" stroke="#3a4659"/>
<rect x="1852.5" y="576.5" width="10" height="8" rx="1" fill="#f4f4f4" stroke="#3a4659"/>
<rect x="1855.5" y="579" width="4" height="2.5" fill="#7f95b3"/>
<path d="M1886.5,576.5 L1890,576.5 L1892,579 L1894,576.5 L1897.5,576.5 L1894,580.5 L1897.5,584.5 L1894,584.5 L1892,582 L1890,584.5 L1886.5,584.5 L1890,580.5 Z" fill="#f4f4f4" stroke="#3a2a30" stroke-width="1"/>
<g shape-rendering="crispEdges">
<polyline points="471.50,673.50 1282.50,673.50 1282.50,687.60" fill="none" stroke="#0000ff" stroke-width="1"/>
<polygon points="1266.00,687.6 1299.00,687.6 1282.50,704.4" fill="none" stroke="#0000ff" stroke-width="1"/>
<rect x="597.00" y="669.00" width="9.00" height="9.00" fill="#0000ff"/>
<polyline points="471.50,673.50 471.50,688.00" fill="none" stroke="#0000ff" stroke-width="1"/>
<polyline points="471.50,688.00 471.50,695.24 485.98,702.48 457.02,716.96 485.98,731.44 457.02,745.92 471.50,753.16 471.50,760.40" fill="none" stroke="#000080" stroke-width="1"/>
<polyline points="471.50,760.40 471.50,789.50 688.00,789.50" fill="none" stroke="#0000ff" stroke-width="1"/>
<polyline points="601.50,673.50 601.50,687.50" fill="none" stroke="#0000ff" stroke-width="1"/>
<path d="M601.5,687.5 C610.5,687.5 616.75,694.5 616.75,702.5 C616.75,707.5 614.5,710.5 612.0,712.5 C607.5,716.0 596.5,716.5 591.0,712.5 C596.5,708.5 607.5,709.0 612.0,712.5 C615.0,715.5 616.75,719.5 616.75,723.5 C616.75,727.5 615.0,732.5 612.0,735.0 C607.5,738.5 596.5,739.0 591.0,735.0 C596.5,731.0 607.5,731.5 612.0,735.0 C615.0,738.0 616.75,742.5 616.75,747.0 C616.75,753.5 610.5,760.0 601.5,760.0" fill="none" stroke="#000080" stroke-width="1"/>
<circle cx="594.00" cy="749.00" r="3.5" fill="none" stroke="#000080" stroke-width="1"/>
<polyline points="601.50,760.00 601.50,789.50" fill="none" stroke="#0000ff" stroke-width="1"/>
<rect x="597.00" y="785.00" width="9.00" height="9.00" fill="#0000ff"/>
<rect x="814.00" y="669.00" width="9.00" height="9.00" fill="#0000ff"/>
<rect x="887.00" y="669.00" width="9.00" height="9.00" fill="#0000ff"/>
<polyline points="818.50,673.50 818.50,687.50" fill="none" stroke="#0000ff" stroke-width="1"/>
<path d="M818.5,687.5 C827.5,687.5 833.75,694.5 833.75,702.5 C833.75,707.5 831.5,710.5 829.0,712.5 C824.5,716.0 813.5,716.5 808.0,712.5 C813.5,708.5 824.5,709.0 829.0,712.5 C832.0,715.5 833.75,719.5 833.75,723.5 C833.75,727.5 832.0,732.5 829.0,735.0 C824.5,738.5 813.5,739.0 808.0,735.0 C813.5,731.0 824.5,731.5 829.0,735.0 C832.0,738.0 833.75,742.5 833.75,747.0 C833.75,753.5 827.5,760.0 818.5,760.0" fill="none" stroke="#000080" stroke-width="1"/>
<circle cx="811.00" cy="749.00" r="3.5" fill="none" stroke="#000080" stroke-width="1"/>
<polyline points="818.50,760.00 818.50,789.50 906.00,789.50" fill="none" stroke="#0000ff" stroke-width="1"/>
<polyline points="891.50,673.50 891.50,688.10" fill="none" stroke="#0000ff" stroke-width="1"/>
<polyline points="891.50,688.10 891.50,695.34 905.98,702.58 877.02,717.06 905.98,731.54 877.02,746.02 891.50,753.26 891.50,760.50" fill="none" stroke="#000080" stroke-width="1"/>
<polyline points="891.50,760.50 891.50,789.50" fill="none" stroke="#0000ff" stroke-width="1"/>
<rect x="887.00" y="785.00" width="9.00" height="9.00" fill="#0000ff"/>
<rect x="1003.00" y="669.00" width="9.00" height="9.00" fill="#0000ff"/>
<rect x="1075.00" y="669.00" width="9.00" height="9.00" fill="#0000ff"/>
<polyline points="1007.50,673.50 1007.50,688.10" fill="none" stroke="#0000ff" stroke-width="1"/>
<polyline points="1007.50,688.10 1007.50,695.34 1021.98,702.58 993.02,717.06 1021.98,731.54 993.02,746.02 1007.50,753.26 1007.50,760.50" fill="none" stroke="#000080" stroke-width="1"/>
<polyline points="1007.50,760.50 1007.50,774.50 1122.50,774.50" fill="none" stroke="#0000ff" stroke-width="1"/>
<polyline points="1079.50,673.50 1079.50,687.50" fill="none" stroke="#0000ff" stroke-width="1"/>
<path d="M1079.5,687.5 C1088.5,687.5 1094.75,694.5 1094.75,702.5 C1094.75,707.5 1092.5,710.5 1090.0,712.5 C1085.5,716.0 1074.5,716.5 1069.0,712.5 C1074.5,708.5 1085.5,709.0 1090.0,712.5 C1093.0,715.5 1094.75,719.5 1094.75,723.5 C1094.75,727.5 1093.0,732.5 1090.0,735.0 C1085.5,738.5 1074.5,739.0 1069.0,735.0 C1074.5,731.0 1085.5,731.5 1090.0,735.0 C1093.0,738.0 1094.75,742.5 1094.75,747.0 C1094.75,753.5 1088.5,760.0 1079.5,760.0" fill="none" stroke="#000080" stroke-width="1"/>
<circle cx="1072.00" cy="749.00" r="3.5" fill="none" stroke="#000080" stroke-width="1"/>
<polyline points="1079.50,760.00 1079.50,774.50" fill="none" stroke="#0000ff" stroke-width="1"/>
<rect x="1075.00" y="770.00" width="9.00" height="9.00" fill="#0000ff"/>
<polyline points="1079.50,774.50 1079.50,792.50" fill="none" stroke="#000080" stroke-width="1"/>
<polyline points="1065.02,792.50 1093.98,792.50 1079.50,814.22 1065.02,792.50" fill="none" stroke="#000080" stroke-width="1"/>
<polyline points="1065.02,814.22 1093.98,814.22" fill="none" stroke="#000080" stroke-width="1"/>
<polyline points="1079.50,814.22 1079.50,832.32" fill="none" stroke="#000080" stroke-width="1"/>
<polyline points="1079.50,832.32 1079.50,847.50" fill="none" stroke="#0000ff" stroke-width="1"/>
<rect x="1075.00" y="843.00" width="9.00" height="9.00" fill="#0000ff"/>
<polyline points="1079.50,847.50 1138.20,847.50" fill="none" stroke="#0000ff" stroke-width="1"/>
<polyline points="1138.20,847.50 1156.30,847.50" fill="none" stroke="#000080" stroke-width="1"/>
<polyline points="1156.30,833.02 1156.30,861.98 1178.02,847.50 1156.30,833.02" fill="none" stroke="#000080" stroke-width="1"/>
<polyline points="1178.02,833.02 1178.02,861.98" fill="none" stroke="#000080" stroke-width="1"/>
<polyline points="1178.02,847.50 1195.50,847.50" fill="none" stroke="#000080" stroke-width="1"/>
<polyline points="1195.50,847.50 1195.50,760.00" fill="none" stroke="#0000ff" stroke-width="1"/>
<rect x="1191.00" y="669.00" width="9.00" height="9.00" fill="#0000ff"/>
<polyline points="1195.50,673.50 1195.50,687.60" fill="none" stroke="#0000ff" stroke-width="1"/>
<polyline points="1195.50,687.60 1195.50,706.40" fill="none" stroke="#000080" stroke-width="1"/>
<rect x="1181.00" y="706.5" width="29" height="7" fill="none" stroke="#000080" stroke-width="1"/>
<polyline points="1166.00,720.50 1225.00,720.50" fill="none" stroke="#000080" stroke-width="1"/>
<rect x="1181.00" y="727.5" width="29" height="7.5" fill="none" stroke="#000080" stroke-width="1"/>
<polyline points="1166.00,742.50 1225.00,742.50" fill="none" stroke="#000080" stroke-width="1"/>
<polyline points="1195.50,742.50 1195.50,760.00" fill="none" stroke="#000080" stroke-width="1"/>
<polyline points="1206.00,753.50 1214.00,753.50" fill="none" stroke="#000080" stroke-width="1"/>
<polyline points="1209.50,749.50 1209.50,757.50" fill="none" stroke="#000080" stroke-width="1"/>
<rect x="1249.00" y="669.00" width="9.00" height="9.00" fill="#0000ff"/>
<polyline points="1253.50,673.50 1253.50,790.00" fill="none" stroke="#0000ff" stroke-width="1"/>
<polyline points="1253.50,790.00 1253.50,807.50" fill="none" stroke="#000080" stroke-width="1"/>
<polyline points="1224.00,807.50 1283.00,807.50" fill="none" stroke="#000080" stroke-width="1"/>
<rect x="1238.50" y="814.5" width="29" height="7" fill="none" stroke="#000080" stroke-width="1"/>
<polyline points="1224.00,829.50 1283.00,829.50" fill="none" stroke="#000080" stroke-width="1"/>
<rect x="1238.50" y="836.5" width="29" height="7" fill="none" stroke="#000080" stroke-width="1"/>
<polyline points="1253.50,843.50 1253.50,861.00" fill="none" stroke="#000080" stroke-width="1"/>
<polyline points="1253.50,861.00 1253.50,963.50 905.50,963.50" fill="none" stroke="#0000ff" stroke-width="1"/>
<polyline points="1235.00,796.50 1243.00,796.50" fill="none" stroke="#000080" stroke-width="1"/>
<polyline points="1238.50,792.50 1238.50,800.50" fill="none" stroke="#000080" stroke-width="1"/>
<polyline points="1079.50,847.50 1079.50,861.50 1050.50,861.50" fill="none" stroke="#000080" stroke-width="1"/>
<polyline points="1050.50,854.00 1050.50,868.50" fill="none" stroke="#000080" stroke-width="1"/>
<polyline points="1043.50,861.00 1043.50,919.50" fill="none" stroke="#000080" stroke-width="1"/>
<polyline points="1050.50,883.00 1050.50,897.60" fill="none" stroke="#000080" stroke-width="1"/>
<polygon points="1050.50,890.5 1072.5,887.5 1072.5,894.5" fill="none" stroke="#000080" stroke-width="1"/>
<polyline points="1072.50,890.50 1079.50,890.50 1079.50,919.50" fill="none" stroke="#000080" stroke-width="1"/>
<polyline points="1050.50,912.00 1050.50,926.00" fill="none" stroke="#000080" stroke-width="1"/>
<polyline points="1050.50,919.50 1079.50,919.50" fill="none" stroke="#000080" stroke-width="1"/>
<polyline points="1079.50,919.50 1079.50,934.00" fill="none" stroke="#000080" stroke-width="1"/>
<polyline points="1079.50,934.00 1079.50,963.50" fill="none" stroke="#0000ff" stroke-width="1"/>
<rect x="1075.00" y="959.00" width="9.00" height="9.00" fill="#0000ff"/>
<polyline points="1079.50,963.50 1253.50,963.50" fill="none" stroke="#0000ff" stroke-width="1"/>
<polyline points="1043.50,919.50 1037.00,919.50" fill="none" stroke="#000080" stroke-width="1"/>
<polyline points="1037.00,919.50 1007.50,919.50 1007.50,876.50 978.30,876.50" fill="none" stroke="#0000ff" stroke-width="1"/>
<polyline points="905.90,876.50 913.14,876.50 920.38,862.02 934.86,890.98 949.34,862.02 963.82,890.98 971.06,876.50 978.30,876.50" fill="none" stroke="#000080" stroke-width="1"/>
<polyline points="905.50,876.50 905.90,876.50" fill="none" stroke="#0000ff" stroke-width="1"/>
<polyline points="905.50,876.50 905.50,897.50" fill="none" stroke="#000080" stroke-width="1"/>
<circle cx="905.50" cy="926" r="28.5" fill="none" stroke="#000080" stroke-width="1"/>
<polyline points="905.50,954.50 905.50,963.50" fill="none" stroke="#000080" stroke-width="1"/>
<polyline points="902.00,905.50 910.00,905.50" fill="none" stroke="#000080" stroke-width="1"/>
<polyline points="906.00,901.50 906.00,909.50" fill="none" stroke="#000080" stroke-width="1"/>
<polyline points="902.00,948.50 910.00,948.50" fill="none" stroke="#000080" stroke-width="1"/>
<path d="M883.3,927 C885,918 891,915.5 895,916.5 C902,918 903,925 905,928 C908,935 912,938 917,937.5 C923,937 927,931 927.8,925.7" fill="none" stroke="#000080" stroke-width="1"/>
</g>
<g font-family="Liberation Sans, sans-serif">
<text transform="translate(529.22 623.80) scale(0.9777 1)" font-size="22.5" font-weight="bold" fill="#000" stroke="#000" stroke-width="0.5">K1 L1 L2 .01</text>
<text transform="translate(529.22 648.80) scale(0.9777 1)" font-size="22.5" font-weight="bold" fill="#000" stroke="#000" stroke-width="0.5">K2 L2 L3 .01</text>
<text transform="translate(782.50 659.70) scale(1.0113 1)" font-size="22.5" font-weight="bold" fill="#0000cc" stroke="#0000cc" stroke-width="0.5">target TC=10us</text>
<text transform="translate(997.80 661.10) scale(1.0355 1)" font-size="22.5" font-weight="bold" fill="#000" stroke="#000" stroke-width="0.5">300µ</text>
<text transform="translate(1067.05 661.10) scale(1.0464 1)" font-size="22.5" font-weight="bold" fill="#000" stroke="#000" stroke-width="0.5">Rser={R} Cpar=75p</text>
<text transform="translate(1147.00 688.80) scale(0.9257 1)" font-size="22.5" font-weight="bold" fill="#000" stroke="#000" stroke-width="0.5">V3</text>
<text transform="translate(489.23 718.00) scale(0.9689 1)" font-size="22.5" font-weight="bold" fill="#000" stroke="#000" stroke-width="0.5">R2</text>
<text transform="translate(489.70 750.50) scale(1.0182 1)" font-size="22.5" font-weight="bold" fill="#000" stroke="#000" stroke-width="0.5">980</text>
<text transform="translate(619.17 718.00) scale(0.9336 1)" font-size="22.5" font-weight="bold" fill="#000" stroke="#000" stroke-width="0.5">L3</text>
<text transform="translate(546.10 738.60) scale(1.0214 1)" font-size="22.5" font-weight="bold" fill="#000" stroke="#000" stroke-width="0.5">300µ</text>
<text transform="translate(545.39 763.40) scale(1.0149 1)" font-size="22.5" font-weight="bold" fill="#000" stroke="#000" stroke-width="0.5">Rser=4 Cpar=75p</text>
<text transform="translate(687.96 798.00) scale(0.9381 1)" font-size="22.5" font-weight="bold" fill="#000" stroke="#000" stroke-width="0.5">Rx</text>
<text transform="translate(836.05 718.10) scale(0.9497 1)" font-size="22.5" font-weight="bold" fill="#000" stroke="#000" stroke-width="0.5">L2</text>
<text transform="translate(836.77 753.60) scale(1.0292 1)" font-size="22.5" font-weight="bold" fill="#000" stroke="#000" stroke-width="0.5">1µ</text>
<text transform="translate(908.72 718.10) scale(0.9762 1)" font-size="22.5" font-weight="bold" fill="#000" stroke="#000" stroke-width="0.5">R3</text>
<text transform="translate(909.48 750.50) scale(1.0202 1)" font-size="22.5" font-weight="bold" fill="#000" stroke="#000" stroke-width="0.5">.1</text>
<text transform="translate(906.30 797.30) scale(1.0076 1)" font-size="22.5" font-weight="bold" fill="#000" stroke="#000" stroke-width="0.5">target</text>
<text transform="translate(976.10 744.70) scale(1.0344 1)" font-size="22.5" font-weight="bold" fill="#000" stroke="#000" stroke-width="0.5">970</text>
<text transform="translate(1025.15 718.10) scale(0.9468 1)" font-size="22.5" font-weight="bold" fill="#000" stroke="#000" stroke-width="0.5">R1</text>
<text transform="translate(1096.55 718.10) scale(0.9457 1)" font-size="22.5" font-weight="bold" fill="#000" stroke="#000" stroke-width="0.5">L1</text>
<text transform="translate(1121.90 783.10) scale(0.9797 1)" font-size="22.5" font-weight="bold" fill="#000" stroke="#000" stroke-width="0.5">Tx</text>
<text transform="translate(1135.30 739.70) scale(1.0290 1)" font-size="22.5" font-weight="bold" fill="#000" stroke="#000" stroke-width="0.5">450</text>
<text transform="translate(1274.40 797.80) scale(0.9442 1)" font-size="22.5" font-weight="bold" fill="#000" stroke="#000" stroke-width="0.5">V1</text>
<text transform="translate(1275.00 876.40) scale(1.0174 1)" font-size="22.5" font-weight="bold" fill="#000" stroke="#000" stroke-width="0.5">6.3</text>
<text transform="translate(993.40 811.00) scale(0.9958 1)" font-size="22.5" font-weight="bold" fill="#000" stroke="#000" stroke-width="0.5">MUR460</text>
<text transform="translate(1047.80 838.10) scale(0.9982 1)" font-size="22.5" font-weight="bold" fill="#000" stroke="#000" stroke-width="0.5">D1</text>
<text transform="translate(1150.88 828.10) scale(1.0239 1)" font-size="22.5" font-weight="bold" fill="#000" stroke="#000" stroke-width="0.5">D2</text>
<text transform="translate(1086.51 885.00) scale(0.9885 1)" font-size="22.5" font-weight="bold" fill="#000" stroke="#000" stroke-width="0.5">M1</text>
<text transform="translate(1121.50 881.90) scale(0.9958 1)" font-size="22.5" font-weight="bold" fill="#000" stroke="#000" stroke-width="0.5">MUR460</text>
<text transform="translate(927.58 856.70) scale(0.9239 1)" font-size="22.5" font-weight="bold" fill="#000" stroke="#000" stroke-width="0.5">R4</text>
<text transform="translate(931.70 910.20) scale(1.0028 1)" font-size="22.5" font-weight="bold" fill="#000" stroke="#000" stroke-width="0.5">.1</text>
<text transform="translate(836.25 927.80) scale(0.9831 1)" font-size="22.5" font-weight="bold" fill="#000" stroke="#000" stroke-width="0.5">V2</text>
<text transform="translate(973.30 940.40) scale(0.9789 1)" font-size="22.5" font-weight="bold" fill="#000" stroke="#000" stroke-width="0.5">SPA11N60C3</text>
<text transform="translate(587.61 848.75) scale(0.9895 1)" font-size="22.5" font-weight="bold" fill="#000" stroke="#000" stroke-width="0.5">.step param R list 1 3 6</text>
<text transform="translate(755.25 996.70) scale(1.0002 1)" font-size="22.5" font-weight="bold" fill="#000" stroke="#000" stroke-width="0.5">PULSE(0 10 0 10n 10n 80u 1000u 1)</text>
<text transform="translate(1274.18 979.00) scale(1.0210 1)" font-size="22.5" font-weight="bold" fill="#000" stroke="#000" stroke-width="0.5">.tran 0 250u 0</text>
</g>
<!-- status bar -->
<rect x="0" y="1019" width="1920" height="2" fill="#ffffff"/>
<rect x="0" y="1021" width="1920" height="1" fill="#d7d7d7"/>
<rect x="1919" y="1023" width="1" height="16" fill="#d0d0d0"/>
<!-- UI text -->
<g font-family="Liberation Sans, sans-serif">
<text transform="translate(23.40 16.30) scale(0.9468 1)" font-size="12" font-weight="normal" fill="#000">LTspice XVII - mur460_diode</text>
<text transform="translate(7.10 36.60) scale(0.8977 1)" font-size="12" font-weight="normal" fill="#000">File</text>
<text transform="translate(39.00 36.60) scale(0.9473 1)" font-size="12" font-weight="normal" fill="#000">View</text>
<text transform="translate(78.40 36.60) scale(0.9648 1)" font-size="12" font-weight="normal" fill="#000">Plot Settings</text>
<text transform="translate(158.40 36.60) scale(1.0171 1)" font-size="12" font-weight="normal" fill="#000">Simulation</text>
<text transform="translate(229.10 36.60) scale(0.9602 1)" font-size="12" font-weight="normal" fill="#000">Tools</text>
<text transform="translate(270.00 36.60) scale(1.0113 1)" font-size="12" font-weight="normal" fill="#000">Window</text>
<text transform="translate(328.10 36.60) scale(0.9758 1)" font-size="12" font-weight="normal" fill="#000">Help</text>
<text transform="translate(31.50 96.30) scale(0.8618 1)" font-size="12" font-weight="normal" fill="#000">mur460_diode</text>
<text transform="translate(132.30 98.60) scale(0.8618 1)" font-size="12" font-weight="normal" fill="#000">mur460_diode</text>
<text transform="translate(32.50 129.20) scale(0.9630 1)" font-size="12" font-weight="normal" fill="#000">mur460_diode</text>
<text transform="translate(32.50 586.25) scale(0.9669 1)" font-size="12" font-weight="normal" fill="#8c8c8c">mur460_diode</text>
<text transform="translate(2.50 1036.25) scale(1.0040 1)" font-size="12" font-weight="normal" fill="#000">Right-Click to manually enter Horizontal Axis Limits</text>
<text transform="translate(502.00 150.80) scale(1.0014 1)" font-size="13" font-weight="bold" fill="#00ff00">V(tx)</text>
<text transform="translate(1399.00 150.80) scale(0.9701 1)" font-size="13" font-weight="bold" fill="#0000ff">I(L1)</text>
</g>
<!-- menu underlines -->
<g fill="#000">
<rect x="7" y="38" width="6" height="1"/><rect x="39" y="38" width="8" height="1"/><rect x="78" y="38" width="7" height="1"/>
<rect x="158" y="38" width="6" height="1"/><rect x="229" y="38" width="7" height="1"/><rect x="270" y="38" width="10" height="1"/>
<rect x="328" y="38" width="7" height="1"/>
</g>
<!-- window caption controls -->
<rect x="1799" y="10" width="10" height="1" fill="#000"/>
<rect x="1844.5" y="7.5" width="7" height="7" fill="none" stroke="#000"/>
<path d="M1846.5,7.5 V5.5 H1853.5 V12.5 H1851.5" fill="none" stroke="#000"/>
<path d="M1890,5 L1900,15 M1900,5 L1890,15" stroke="#000" stroke-width="1.1"/>
<g id="icons" shape-rendering="crispEdges">
<!-- title bar LT logo -->
<path d="M2.5,3.2 V18.5 L14,10.6 M2.5,3.2 L6,5.3" fill="none" stroke="#000" stroke-width="1.3" shape-rendering="auto"/>
<path d="M8.3,3 L9,3 L7.4,8 L10.8,10.7 L3.8,10.7 Z" fill="#8b0000" shape-rendering="auto"/>
<path d="M10,3.6 L17.8,3.2 L16.2,4.8 L13.2,10.6 L12.2,10.6 L14.2,4.9 L10.2,4.9 Z" fill="#8b0000" shape-rendering="auto"/>
<!-- grip -->
<g fill="#b4b4b4"><rect x="5" y="50" width="2" height="2"/><rect x="5" y="55" width="2" height="2"/><rect x="5" y="60" width="2" height="2"/><rect x="5" y="65" width="2" height="2"/><rect x="5" y="70" width="2" height="2"/><rect x="5" y="75" width="2" height="2"/></g>
<!-- separators -->
<g fill="#a0a0a0"><rect x="77" y="50" width="1" height="25"/><rect x="116" y="50" width="1" height="25"/><rect x="155" y="50" width="1" height="25"/><rect x="225" y="50" width="1" height="25"/><rect x="357" y="50" width="1" height="25"/><rect x="427" y="50" width="1" height="25"/><rect x="528" y="50" width="1" height="25"/><rect x="660" y="50" width="1" height="25"/><rect x="730" y="50" width="1" height="25"/></g>
<!-- run: page with play -->
<path d="M18.5,51.5 H32.5 L37.5,56.5 V72.5 H18.5 Z" fill="#fff" stroke="#000" stroke-width="1.3"/>
<path d="M32.5,51.5 V56.5 H37.5" fill="none" stroke="#000" stroke-width="1"/>
<path d="M23,56 L34,62.5 L23,69 Z" fill="#000" shape-rendering="auto"/>
<!-- open folder -->
<path d="M49.5,57.5 L52,54.5 L56,54.5 L58,57 L64,57 L64,61 L70.5,61 L70.5,62.5 L65,69.5 L49.5,69.5 Z" fill="#ffff60" stroke="#000" stroke-width="1.2" shape-rendering="auto"/>
<path d="M50,69 L56,61.5 L70,61.5 L64.5,69 Z" fill="#808000" stroke="#000" stroke-width="1" shape-rendering="auto"/>
<path d="M61.5,54 C62,51 67,50.5 69.5,54.5" fill="none" stroke="#000" stroke-width="1.3" shape-rendering="auto"/>
<path d="M67,54.5 L71,54.5 L70.5,57.5 Z" fill="#000" shape-rendering="auto"/>
<!-- save -->
<rect x="88" y="51" width="20" height="20" fill="#000"/>
<rect x="89" y="52" width="18" height="18" fill="#808000"/>
<rect x="92" y="52" width="12" height="9" fill="#fff"/>
<rect x="92" y="64" width="12" height="6" fill="#000"/>
<rect x="101" y="66" width="2" height="4" fill="#fff"/>
<rect x="105" y="52" width="2" height="2" fill="#fff"/>
<!-- hammer -->
<path d="M125,54 L128,53 L130,54 L133,51.5 L140,51.5 L146,55 L148.5,58 L148.5,62.5 L146,59 L141,58.5 L137,60 L131,60 L128,59.5 L125.5,60 Z" fill="#fff" stroke="#000" stroke-width="1.2" shape-rendering="auto"/>
<rect x="136" y="61" width="4" height="6" fill="#0000ff"/>
<rect x="134" y="67" width="7" height="6" fill="#0000ff"/>
<rect x="134" y="67" width="3" height="6" fill="#000080"/>
<!-- running man -->
<g stroke="#000" stroke-width="1.6" fill="none" shape-rendering="auto">
<path d="M164.5,67 L164.5,66 L168,66 L170,64.5 L174,61.5 L177,58 L179,56 L181.5,52.5"/>
<path d="M171,57.5 L174,55.5 L175.5,57.5"/>
<path d="M177,58 L179,60.5 L182,61 L185,59.5"/>
<path d="M175.5,62 L178,65 L177,69 L176,71.5 L178,72"/>
</g>
<path d="M180.5,51 L185,51 L183,54 L181,55 Z" fill="#000" shape-rendering="auto"/>
<g stroke="#a0a0a0" stroke-width="1" shape-rendering="auto"><path d="M167.5,51.5 L171,53.5"/><path d="M164.5,54 L168,56"/></g>
<!-- hand (gray) -->
<path d="M199,62 L201,61 L204,64 L204,54 L206,54 L206,52 L208,51.5 L210,52 L212,54 L214,55.5 L215.5,57 L215.5,70 L213.5,72.5 L203,72.5 L198,64 Z" fill="none" stroke="#a0a0a0" stroke-width="1.4" shape-rendering="auto"/>
<g stroke="#a0a0a0" stroke-width="1"><path d="M207.5,54 V63"/><path d="M210.5,54 V63"/><path d="M213,56 V63"/></g>
<!-- zoom icons -->
<g shape-rendering="auto">
<circle cx="243.9" cy="58.6" r="6.8" fill="#fff" stroke="#000" stroke-width="1.6"/>
<path d="M248.5,63.3 L256.5,71.3" stroke="#000" stroke-width="2.8"/>
<path d="M239.3,58.9 H248.8 M243.9,54.2 V63.6" stroke="#000" stroke-width="2"/>
<path d="M239.5,56 A5,5 0 0 1 241.5,54" stroke="#00ffff" stroke-width="1.2" fill="none"/>
<circle cx="274.8" cy="58.6" r="6.8" fill="#fff" stroke="#000" stroke-width="1.6"/>
<path d="M279.4,63.3 L287.4,71.3" stroke="#000" stroke-width="2.8"/>
<path d="M270.5,57 A5,5 0 0 1 273,53.5 M279,59 A5,5 0 0 1 276,63.5" stroke="#00ffff" stroke-width="1.2" fill="none"/>
<circle cx="305.75" cy="58.6" r="6.8" fill="#fff" stroke="#000" stroke-width="1.6"/>
<path d="M310.3,63.3 L318.3,71.3" stroke="#000" stroke-width="2.8"/>
<path d="M301.5,58.9 H309.5" stroke="#000" stroke-width="2"/>
<path d="M301,56 A5,5 0 0 1 303.5,54 M310,60 A5,5 0 0 1 308,63" stroke="#00ffff" stroke-width="1.2" fill="none"/>
<circle cx="336.7" cy="58.6" r="6.8" fill="#fff" stroke="#000" stroke-width="1.6"/>
<path d="M341.3,63.3 L349.3,71.3" stroke="#000" stroke-width="2.8"/>
<path d="M328,52 L340,64 M345.5,52 L333,65 M329,65.5 L335,64 M338,66 L341,71" stroke="#ff0000" stroke-width="2"/>
</g>
<!-- chart icons -->
<g shape-rendering="auto">
<path d="M368.5,51 V72.5 M366,70.7 H390 M366,53.2 H368.5 M366,57.4 H368.5 M366,61.5 H368.5 M366,66 H368.5 M373.4,70.7 V72.5 M378.4,70.7 V72.5 M383.4,70.7 V72.5 M388.4,70.7 V72.5" stroke="#000" stroke-width="1.3" fill="none"/>
<path d="M369,56.5 L374.5,51.3 L379.5,56.8 L384.5,51.3 L390,56.8" stroke="#000080" stroke-width="1.1" fill="none"/>
<path d="M369,60.5 L372.5,58.3 L375.5,58.3 L377.5,60.5 L382.5,60.5 L385,62.5 L386.5,62.5 L389.5,60.5" stroke="#ff0000" stroke-width="1.3" fill="none"/>
<path d="M369,64.6 H375 V66.6 H378.5 V64.6 H386 V66.4 H390" stroke="#000080" stroke-width="1.5" fill="none"/>
<path d="M399.4,51 V72.5 M397,70.7 H421 M397,53.2 H399.4 M397,57.4 H399.4 M397,61.5 H399.4 M397,66 H399.4 M404.5,70.7 V72.5 M409.5,70.7 V72.5 M414.5,70.7 V72.5 M419.5,70.7 V72.5" stroke="#000" stroke-width="1.3" fill="none"/>
<path d="M406,54.5 L410,52.8 L415,51.3 M406,64.5 L410,66.8 L415,68.8" stroke="#ff0000" stroke-width="1.3" fill="none"/>
<path d="M405.5,55.5 V64 M403.5,57.5 L405.5,55.5 L407.5,57.5 M403.5,62 L405.5,64 L407.5,62 M417.5,51.5 V68.5 M414.5,54.5 L417.5,51.5 L420.5,54.5 M414.5,65.5 L417.5,68.5 L420.5,65.5" stroke="#000" stroke-width="1.2" fill="none"/>
</g>
<!-- tile -->
<rect x="436.5" y="51.5" width="23" height="10" fill="#fff" stroke="#000080" stroke-width="1.2"/>
<rect x="436" y="51" width="24" height="3.5" fill="#000080"/>
<rect x="436.5" y="61.5" width="23" height="11" fill="#fff" stroke="#000080" stroke-width="1.2"/>
<rect x="436" y="61" width="24" height="4" fill="#000080"/>
<g fill="#fff"><rect x="437.5" y="52" width="2" height="2"/><rect x="454" y="52" width="2" height="2"/><rect x="457" y="52" width="2" height="2"/><rect x="437.5" y="62" width="2" height="2"/><rect x="454" y="62" width="2" height="2"/><rect x="457" y="62" width="2" height="2"/></g>
<!-- cascade -->
<g>
<rect x="467.5" y="51.5" width="14.5" height="11" fill="#fff" stroke="#000080" stroke-width="1.2"/><rect x="467" y="51" width="15.5" height="3.5" fill="#000080"/>
<rect x="472.5" y="57.5" width="13.5" height="10" fill="#fff" stroke="#000080" stroke-width="1.2"/><rect x="472" y="57" width="14.5" height="3.5" fill="#000080"/>
<rect x="476.5" y="63.5" width="14" height="9" fill="#fff" stroke="#000080" stroke-width="1.2"/><rect x="476" y="63" width="15" height="3.5" fill="#000080"/>
<rect x="498.5" y="51.5" width="11.5" height="11" fill="#fff" stroke="#000080" stroke-width="1.2"/><rect x="498" y="51" width="12.5" height="3.5" fill="#000080"/>
<rect x="503.5" y="57.5" width="10.5" height="10" fill="#fff" stroke="#000080" stroke-width="1.2"/><rect x="503" y="57" width="11.5" height="3.5" fill="#000080"/>
<rect x="507.5" y="63.5" width="10.5" height="9" fill="#fff" stroke="#000080" stroke-width="1.2"/><rect x="507" y="63" width="11.5" height="3.5" fill="#000080"/>
<path d="M516.5,51.5 L522,51.5 M516.5,51.5 L516.5,56 M517,52 L522,57.5" stroke="#000" stroke-width="1.3" shape-rendering="auto"/>
</g>
<!-- scissors -->
<g shape-rendering="auto">
<path d="M546.5,51.5 L546.5,55 L549,59 L552.5,51.5 M551.5,55 L549,60 L548,62" stroke="#000" stroke-width="1.4" fill="none"/>
<ellipse cx="545.5" cy="67.5" rx="2.7" ry="3.6" fill="none" stroke="#000080" stroke-width="1.4"/>
<ellipse cx="553.5" cy="66.5" rx="2.4" ry="3.5" fill="none" stroke="#000080" stroke-width="1.4"/>
<path d="M547.5,64 L549,61.5 L551.5,63.5" stroke="#000080" stroke-width="1.4" fill="none"/>
</g>
<!-- copy -->
<path d="M570.5,51.5 H577.5 L581,55 V65.5 H570.5 Z" fill="#fff" stroke="#000" stroke-width="1"/>
<path d="M579.5,56.5 H587.5 L591.5,60.5 V69.5 H579.5 Z" fill="#fff" stroke="#000080" stroke-width="1.2"/>
<g fill="#000"><rect x="572" y="56" width="2" height="1"/><rect x="572" y="59" width="6" height="1"/><rect x="572" y="62" width="6" height="1"/><rect x="582" y="60" width="3" height="1"/><rect x="582" y="63" width="7" height="1"/><rect x="582" y="66" width="7" height="1"/></g>
<!-- paste gray -->
<rect x="601" y="53" width="20" height="17" rx="1.5" fill="#a0a0a0"/>
<rect x="608" y="51" width="6" height="3" fill="#a0a0a0"/>
<rect x="606" y="55.5" width="10" height="1.5" fill="#dcdcdc"/>
<rect x="610.5" y="61.5" width="12" height="9" fill="#e8e8e8" stroke="#a0a0a0"/>
<g fill="#a0a0a0"><rect x="613" y="63" width="4" height="1"/><rect x="613" y="67" width="7" height="1"/></g>
<!-- binoculars -->
<path d="M636,53 H641 V57 H642.5 V62 H644.5 V57 H646 V53 H651 V60 L653.5,61.5 V72.5 H645 V68 H641.5 V72.5 H631 V61.5 L634.5,59 V57 H636 Z" fill="#000"/>
<g fill="#fff"><rect x="637.5" y="54.5" width="2" height="2"/><rect x="647.5" y="54.5" width="2" height="2"/><rect x="636.5" y="58.5" width="2" height="2"/><rect x="646" y="58.5" width="2" height="2"/><rect x="634.5" y="61.5" width="1.5" height="4"/><rect x="640" y="61.5" width="2" height="3"/><rect x="645" y="61.5" width="1.5" height="4"/><rect x="633" y="66.5" width="2" height="3"/><rect x="648.5" y="67" width="2" height="3"/></g>
<!-- printer 1 -->
<g shape-rendering="auto">
<path d="M677.5,52.5 H686.5 L690.5,56.5 V60.5 H677.5 Z" fill="#ddd" stroke="#000" stroke-width="1.2"/>
<path d="M671.5,63 L674,60 H692.5 V70.5 H671.5 Z" fill="#ddd" stroke="#000" stroke-width="1.3"/>
<rect x="677.5" y="70.5" width="12" height="2" fill="#fff" stroke="#000" stroke-width="1"/>
<!-- printer 2 -->
<path d="M700,60 L703,57.5 H723 V66 L719,72.5 H700 Z" fill="#fff" stroke="#000" stroke-width="1.3"/>
<path d="M707,51.5 H722.5 L718,60.5 H703.5 Z" fill="#fff" stroke="#000" stroke-width="1.2"/>
<path d="M700,63.5 H718.5 L723,59 M700,68 H718.5 L723,64.5 M718.5,63.5 V72.5" stroke="#000" stroke-width="1.2" fill="none"/>
<path d="M710,54 H717 M709,56 H716 M708,58.2 H715" stroke="#000" stroke-width="0.9"/>
<rect x="710" y="65" width="5" height="1.3" fill="#e0e000"/>
</g>
<!-- gray schematic tools -->
<g stroke="#a0a0a0" fill="none" shape-rendering="auto">
<path d="M742.5,70.5 H763" stroke-width="1.2"/>
<path d="M742,70 L742,62 L751,52 L753.5,51.5 L755,53 L755,55 L746,66 Z" fill="#a0a0a0" stroke="none"/>
<path d="M781.5,51 V61.5 M770.5,61.5 H792.5 L781.5,72.5 Z" stroke-width="1.3"/>
<path d="M802.5,53 H821 A2,2 0 0 1 823,55 V63 A2,2 0 0 1 821,65 H802.5 A2,2 0 0 1 800.5,63 V55 A2,2 0 0 1 802.5,53 Z M812,65 V73" stroke-width="1.5"/>
<path d="M807,55.5 H815.5 V62.5 H807 Z" stroke-width="1"/>
<path d="M809.5,61.5 V57.5 L811.2,56.5 L813,57.5 V61.5 M809.5,59.5 H813" stroke-width="1"/>
<path d="M843.5,51 V53 L852,57.5 L836,64.5 L843.5,68.5 V72.5" stroke-width="1.3"/>
<path d="M874,51 V60.5 M866,60.5 H882 M866,64.5 H882 M874,64.5 V73" stroke-width="1.8"/>
<path d="M901,52 C906,51.5 910,55 905.5,58.5 C910,62 910,67 905.5,67 C910,70 906,73 901,72" stroke-width="1.5"/>
<path d="M937.5,51 V73 M926,55.5 H949 L937.5,66.5 Z M926,66.5 H949" stroke-width="1.5"/>
<path d="M956,57.5 H960 M956,66.5 H960 M960.5,54.5 H967 C973,54.5 976,58 976,62 C976,66 973,69.5 967,69.5 H960.5 Z M976,62 H980" stroke-width="1.7"/>
<path d="M988.5,62 L991,61 L994,64 L992,55 L994,53 L996,55 L998,61 L997,52.5 L999.5,51.5 L1001,53 L1002,60 L1003,54 L1005.5,53 L1006.5,56 L1006,61 L1008,57.5 L1010.5,58.5 L1009.5,65 L1006,71.5 L998,72 Z" stroke-width="1.4"/>
<path d="M1020,61.5 L1023,60 L1025,62 L1025,56 L1027.5,54.5 L1029.5,55.5 L1031,54 L1033.5,55 L1035,57 L1037,57.5 L1038.5,60 L1038,65 L1035.5,68 L1035.5,71.5 L1026,71.5 L1026,68.5 Z M1029.5,56 V61 M1033,56 V61" stroke-width="1.4"/>
<path d="M1097,58.5 A7.5,7.5 0 1 0 1095.5,69.5" stroke-width="1.5"/><path d="M1102,63 L1101.5,56 L1095,59.5 Z" fill="#a0a0a0" stroke="none"/>
<path d="M1111,73 V61 H1117 M1111,67 H1116 M1111,73 H1117 M1121,62 H1135 V70 M1126,62 V70 M1130,62 V70 M1113,56 L1116,53 H1128 L1132,55 M1129,53 L1132,55 L1130,57" stroke-width="1.8"/>
<path d="M1142,73 V61 H1148 M1142,67 H1147 M1142,73 H1148 M1159,61 H1165 V73 H1159 M1160,67 H1165 M1144,56 L1147,53 H1159 L1162,55 M1160,53 L1162,55 L1161,57" stroke-width="1.8"/>
<path d="M1174,70 L1185,53 L1186,70 M1178,64 H1186 M1188,63 C1193,59 1196,65 1192,70 C1189,70 1188,66 1191,63 L1195,70" stroke-width="1.8"/>
<path d="M1205.5,62 V63 M1210,59 H1214 V64 H1210 Z M1217,58 V73 M1217,59 H1222 V64 H1217" stroke-width="1.8"/>
</g>
<path d="M1056.5,58.5 A7.5,7.5 0 1 1 1058,69.5" fill="none" stroke="#000" stroke-width="1.5" shape-rendering="auto"/>
<path d="M1063,54.8 A7.5,7.5 0 0 1 1069.5,61" fill="none" stroke="#c8b400" stroke-width="0.9" shape-rendering="auto"/>
<path d="M1051.5,63 L1052,56 L1058.5,59.5 Z" fill="#000" shape-rendering="auto"/>
<!-- tab icons -->
<rect x="12" y="85" width="14" height="13" fill="#c0c0c0"/>
<path d="M11.5,84 V99.5 M11,98.5 H26 M9.5,87 H11.5 M9.5,90 H11.5 M9.5,93 H11.5 M9.5,96 H11.5 M14.5,98.5 V100.5 M17.5,98.5 V100.5 M20.5,98.5 V100.5 M23.5,98.5 V100.5" stroke="#000" stroke-width="1.3" fill="none"/>
<path d="M12,92 L14.5,88.5 L17,88.5 L19,90.5 L21,90.5 L25.5,86.5" stroke="#ff0000" stroke-width="1.6" fill="none" shape-rendering="auto"/>
<g shape-rendering="auto">
<path d="M113,93.5 H116.5 M118,91 L122,86.5 M118,96 L123.5,101.5" stroke="#0000ff" stroke-width="1.3" fill="none"/>
<rect x="116" y="89" width="2.3" height="8.5" fill="#0000ff"/>
<path d="M119.5,99 L122,97.5 L122.5,100.5 Z" fill="#0000ff"/>
</g>
<!-- plot window icon -->
<rect x="12" y="116" width="16" height="15" fill="#c0c0c0"/>
<path d="M12,121 L15.5,117.5 L18.5,120.5 L21.5,117.5 L25,120.5 L28,121" stroke="#0000ff" stroke-width="1.2" fill="none" shape-rendering="auto"/>
<g fill="#ff0000"><rect x="14" y="123" width="3" height="1.5"/><rect x="19" y="124" width="1.5" height="1.5"/><rect x="23" y="125" width="2.5" height="1.5"/></g>
<g fill="#000080"><rect x="17" y="128" width="1.5" height="1.5"/><rect x="22.5" y="128" width="1.5" height="1.5"/></g>
<rect x="12" y="130" width="16" height="1.5" fill="#000"/>
<!-- schematic window icon -->
<g shape-rendering="auto">
<path d="M14,580.5 H17.5 M19,578 L23.5,573.5 M19,583 L24.5,588.5" stroke="#0000ff" stroke-width="1.3" fill="none"/>
<rect x="17" y="576" width="2.3" height="8.5" fill="#0000ff"/>
<path d="M20.5,586 L23,584.5 L23.5,587.5 Z" fill="#0000ff"/>
</g>
</g>

</svg>
</body></html>
